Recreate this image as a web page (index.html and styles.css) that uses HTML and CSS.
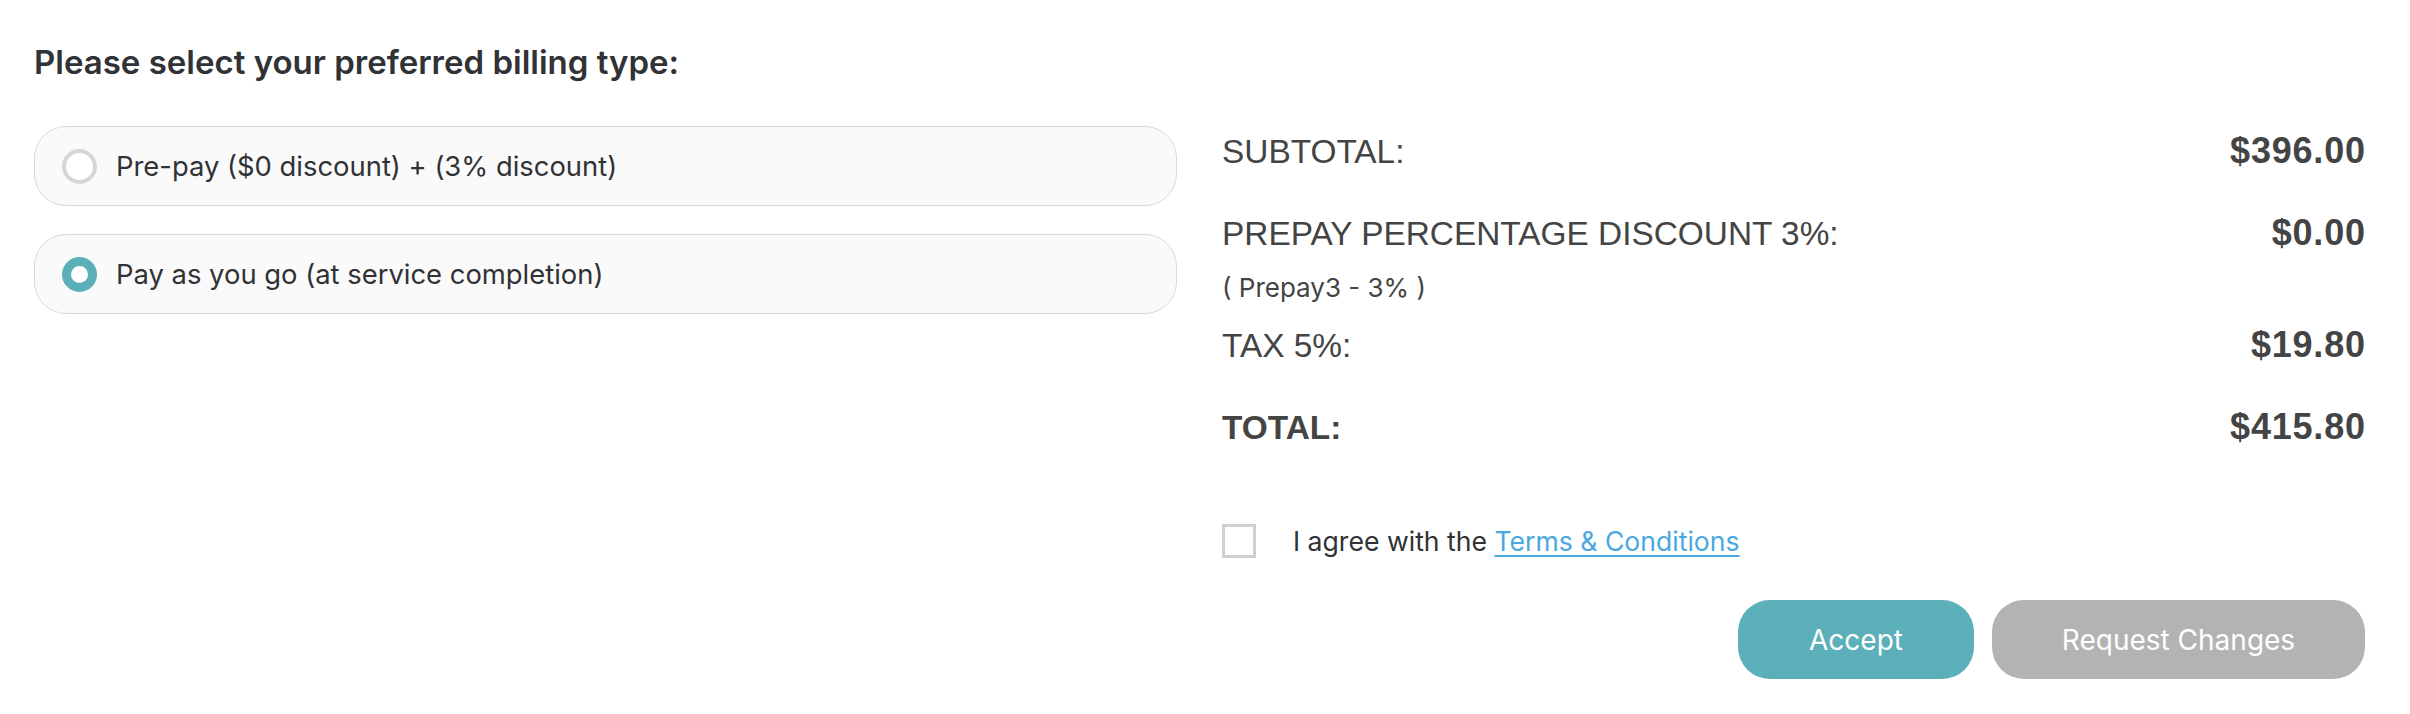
FILE: index.html
```html
<!DOCTYPE html>
<html>
<head>
<meta charset="utf-8">
<link rel="stylesheet" href="styles.css">
</head>
<body>
<div class="page">
  <h2 class="title">Please select your preferred billing type:</h2>
  <div class="cols">
    <div class="options">
      <label class="option">
        <span class="radio"></span>
        <span class="opt-text">Pre-pay ($0 discount) + (3% discount)</span>
      </label>
      <label class="option">
        <span class="radio radio-on"></span>
        <span class="opt-text">Pay as you go (at service completion)</span>
      </label>
    </div>
    <div class="summary">
      <div class="row row-sub">
        <span class="label">SUBTOTAL:</span>
        <span class="value">$396.00</span>
      </div>
      <div class="row row-disc">
        <span class="label">PREPAY PERCENTAGE DISCOUNT 3%:</span>
        <span class="value">$0.00</span>
      </div>
      <div class="note">( Prepay3 - 3% )</div>
      <div class="row row-tax">
        <span class="label">TAX 5%:</span>
        <span class="value">$19.80</span>
      </div>
      <div class="row row-total">
        <span class="label label-bold">TOTAL:</span>
        <span class="value">$415.80</span>
      </div>
      <div class="agree">
        <span class="checkbox"></span>
        <span class="agree-text">I agree with the <a class="link" href="#">Terms &amp; Conditions</a></span>
      </div>
      <div class="actions">
        <button class="btn btn-accept">Accept</button>
        <button class="btn btn-changes">Request Changes</button>
      </div>
    </div>
  </div>
</div>
</body>
</html>
```

FILE: styles.css
```css
html, body {
  margin: 0;
  padding: 0;
  background: #ffffff;
}

.page {
  padding: 42px 45px 0 34px;
  font-family: "Inter", "Noto Sans", sans-serif;
  color: #303236;
}

.title {
  margin: 0;
  font-size: 33px;
  line-height: 40px;
  font-weight: 600;
  color: #303236;
}

.cols {
  margin-top: 44px;
  display: grid;
  grid-template-columns: 1fr 1fr;
  column-gap: 45px;
}

.options {
  display: flex;
  flex-direction: column;
  gap: 28px;
}

.option {
  box-sizing: border-box;
  height: 80px;
  border: 1px solid #d9d9d9;
  border-radius: 32px;
  background: #fafafa;
  display: flex;
  align-items: center;
  padding-left: 27px;
}

.radio {
  box-sizing: border-box;
  width: 35px;
  height: 35px;
  border-radius: 50%;
  border: 4px solid #d6d6d6;
  background: #ffffff;
  flex: none;
}

.radio-on {
  border: 9px solid #5aafb8;
}

.opt-text {
  margin-left: 19px;
  font-size: 27.4px;
  line-height: 34px;
  color: #303236;
}

.summary {
  padding-top: 5px;
  color: #444444;
  display: flex;
  flex-direction: column;
}

.row {
  display: flex;
  justify-content: space-between;
  align-items: baseline;
  font-family: "Liberation Sans", Arial, sans-serif;
  font-size: 33.4px;
  line-height: 40px;
}

.row-disc {
  margin-top: 41px;
}

.row-tax {
  margin-top: 21px;
}

.row-total {
  margin-top: 41px;
}

.label-bold {
  font-weight: 700;
}

.value {
  font-weight: 700;
  font-size: 36px;
  letter-spacing: 0.8px;
  margin-right: -0.8px;
}

.note {
  margin-top: 18px;
  font-size: 26px;
  line-height: 32px;
  color: #444444;
}

.agree {
  margin-top: 76px;
  display: flex;
  align-items: center;
}

.checkbox {
  box-sizing: border-box;
  width: 34px;
  height: 34px;
  border: 3px solid #d0d0d0;
  background: #ffffff;
  flex: none;
}

.agree-text {
  margin-left: 37px;
  font-size: 26.6px;
  line-height: 34px;
  color: #303236;
}

.link {
  color: #4aa8e0;
  text-decoration: underline;
  text-decoration-thickness: 2px;
  text-underline-offset: 4px;
}

.actions {
  margin-top: 42px;
  display: flex;
  justify-content: flex-end;
  gap: 18px;
}

.btn {
  height: 79px;
  border: none;
  border-radius: 32px;
  font-family: "Inter", "Noto Sans", sans-serif;
  font-size: 28px;
  color: #ffffff;
  cursor: pointer;
}

.btn-accept {
  width: 236px;
  background: #5aafb8;
}

.btn-changes {
  width: 373px;
  background: #b3b3b3;
}
```
